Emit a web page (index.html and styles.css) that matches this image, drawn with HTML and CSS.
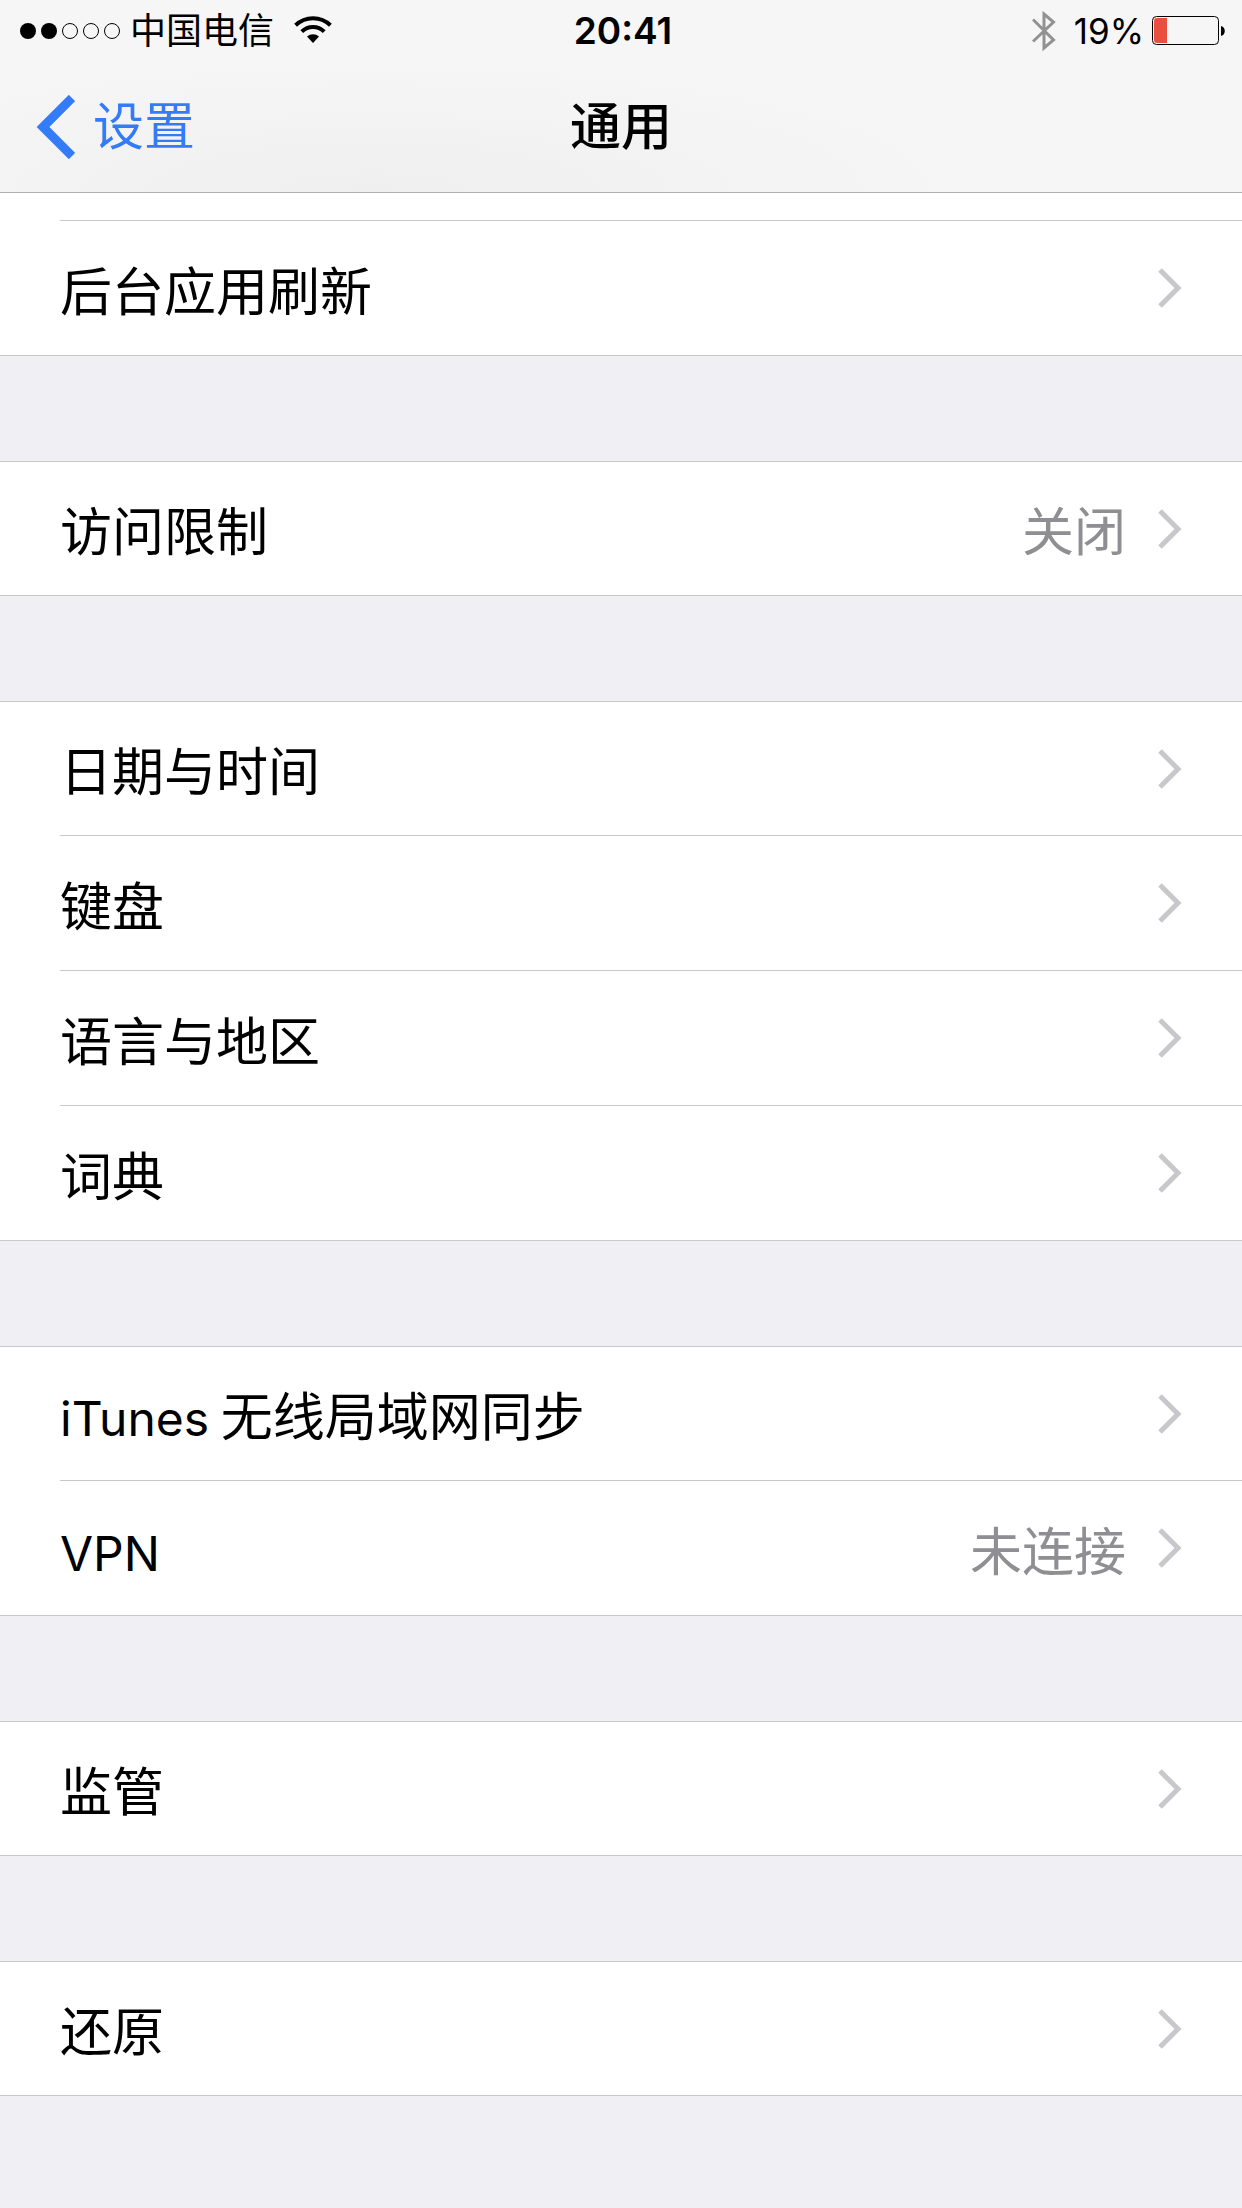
FILE: index.html
```
<!DOCTYPE html>
<html lang="zh-CN">
<head>
  <meta charset="UTF-8"/>
  <meta name="viewport" content="width=device-width, initial-scale=1.0"/>
  <title>通用</title>
  <link rel="stylesheet" href="styles.css">
</head>
<body>

  <!-- Shared icons -->
  <svg class="icon-defs" aria-hidden="true">
    <symbol id="chevron" viewBox="0 0 24 40">
      <path d="M2 2l18 18L2 38" fill="none" stroke="currentColor" stroke-width="5"/>
    </symbol>
  </svg>

  <header>
    <div class="status-bar">
      <div class="status-left">
        <svg class="signal" viewBox="0 0 100 16" aria-hidden="true">
          <circle cx="8" cy="8" r="8"/>
          <circle cx="29" cy="8" r="8"/>
          <g fill="none" stroke="#000">
            <circle cx="50" cy="8" r="7.5"/>
            <circle cx="71" cy="8" r="7.5"/>
            <circle cx="92" cy="8" r="7.5"/>
          </g>
        </svg>
        <span class="carrier">中国电信</span>
        <svg class="wifi" viewBox="0 0 38 30" aria-hidden="true">
          <path d="M1.6 9.2a25 25 0 0 1 34.8 0" fill="none" stroke="#000" stroke-width="4"/>
          <path d="M7.8 15.6a16 16 0 0 1 22.4 0" fill="none" stroke="#000" stroke-width="4"/>
          <path d="M13 20.6a8.6 8.6 0 0 1 12 0L19 27z"/>
        </svg>
      </div>
      <span class="time">20:41</span>
      <div class="status-right">
        <svg class="bluetooth" viewBox="0 0 24 42" aria-hidden="true">
          <path d="M1 9.5l20.5 20.5L12 38V4l9.5 8L1 31.5" fill="none" stroke="#929292" stroke-width="3"/>
        </svg>
        <span class="percent">19%</span>
        <svg class="battery" viewBox="0 0 74 30" aria-hidden="true">
          <rect x="0.5" y="0.5" width="66" height="28" rx="4" fill="none" stroke="#000"/>
          <path d="M5 2h10v25H5a3 3 0 0 1-3-3V5a3 3 0 0 1 3-3z" fill="#ea4e3d"/>
          <path d="M69 10c5 1 5 9 0 10z"/>
        </svg>
      </div>
    </div>

    <nav>
      <a class="back" href="#">
        <svg viewBox="0 0 39 64" aria-hidden="true">
          <path d="M36 3L7 32l29 29" fill="none" stroke="currentColor" stroke-width="9"/>
        </svg>
        设置
      </a>
      <h1>通用</h1>
    </nav>
  </header>

  <main>
    <ul class="group scrolled">
      <li class="tail"></li>
      <li><a class="row" href="#"><span class="label">后台应用刷新</span><svg class="chevron"><use href="#chevron"/></svg></a></li>
    </ul>

    <ul class="group">
      <li><a class="row" href="#"><span class="label">访问限制</span><span class="value">关闭</span><svg class="chevron"><use href="#chevron"/></svg></a></li>
    </ul>

    <ul class="group">
      <li><a class="row" href="#"><span class="label">日期与时间</span><svg class="chevron"><use href="#chevron"/></svg></a></li>
      <li><a class="row" href="#"><span class="label">键盘</span><svg class="chevron"><use href="#chevron"/></svg></a></li>
      <li><a class="row" href="#"><span class="label">语言与地区</span><svg class="chevron"><use href="#chevron"/></svg></a></li>
      <li><a class="row" href="#"><span class="label">词典</span><svg class="chevron"><use href="#chevron"/></svg></a></li>
    </ul>

    <ul class="group">
      <li><a class="row" href="#"><span class="label"><span class="latin">iTunes</span> 无线局域网同步</span><svg class="chevron"><use href="#chevron"/></svg></a></li>
      <li><a class="row" href="#"><span class="label"><span class="latin">VPN</span></span><span class="value">未连接</span><svg class="chevron"><use href="#chevron"/></svg></a></li>
    </ul>

    <ul class="group">
      <li><a class="row" href="#"><span class="label">监管</span><svg class="chevron"><use href="#chevron"/></svg></a></li>
    </ul>

    <ul class="group">
      <li><a class="row" href="#"><span class="label">还原</span><svg class="chevron"><use href="#chevron"/></svg></a></li>
    </ul>
  </main>

</body>
</html>
```
FILE: styles.css
```
* {
  box-sizing: border-box;
}

body {
  font-family: Inter, "Noto Sans CJK SC", sans-serif;
  font-size: 51px;
  margin: 0;
  color: #000;
  background-color: #efeff4;
}

a {
  color: inherit;
  text-decoration: none;
}

svg {
  display: block;
  flex: none;
}

.icon-defs {
  position: absolute;
  width: 0;
  height: 0;
}

header {
  position: sticky;
  top: 0;
  z-index: 1;
  background: radial-gradient(ellipse at 30% 100%, #efefef, transparent 50%), #f6f6f7;
  border-bottom: 1px solid #b0b0b1;
}

/* Status bar */
.status-bar {
  display: grid;
  grid-template-columns: 1fr auto 1fr;
  align-items: center;
  height: 62px;
  padding: 0 16px 0 20px;
  font-size: 36px;
  line-height: 62px;
}

.status-left,
.status-right {
  display: flex;
  align-items: center;
}

.status-right {
  justify-content: flex-end;
}

.signal {
  width: 100px;
  height: 16px;
  margin-right: 10px;
}

.wifi {
  width: 38px;
  height: 30px;
  margin-left: 20px;
}

.time {
  font-size: 37px;
  font-weight: 600;
}

.bluetooth {
  width: 24px;
  height: 42px;
  margin-right: 18px;
}

.percent {
  font-size: 35px;
}

.battery {
  width: 74px;
  height: 30px;
  margin-left: 8px;
}

/* Nav bar */
nav {
  display: grid;
  grid-template-columns: 1fr auto 1fr;
  align-items: center;
  height: 130px;
  padding: 0 36px;
  line-height: 130px;
}

.back {
  display: flex;
  align-items: center;
  gap: 18px;
  color: #347cf7;
}

.back svg {
  width: 39px;
  height: 64px;
}

h1 {
  margin: 0;
  font-size: 51px;
  font-weight: 500;
}

/* Settings list */
.group {
  list-style: none;
  margin: 0 0 105px;
  padding: 0;
  font-family: "Noto Sans CJK SC", sans-serif;
  font-size: 52px;
  background-color: #fff;
  border-bottom: 1px solid #c8c7cc;
}

.group li {
  padding-left: 60px;
}

.row {
  display: flex;
  align-items: center;
  height: 134px;
  padding-right: 60px;
}

.group li + li .row {
  height: 135px;
  border-top: 1px solid #c8c7cc;
}

.group li:first-child {
  border-top: 1px solid #c8c7cc;
}

.group li:first-child .row {
  height: 133px;
}

.group .tail {
  height: 27px;
}

.group.scrolled .tail {
  border-top: 0;
}

.label {
  flex: 1;
}

.latin {
  font-family: Inter, sans-serif;
  font-size: 48px;
}

.value {
  color: #8e8e93;
}

.chevron {
  width: 24px;
  height: 40px;
  margin-left: 32px;
  color: #c7c7cc;
}
```
